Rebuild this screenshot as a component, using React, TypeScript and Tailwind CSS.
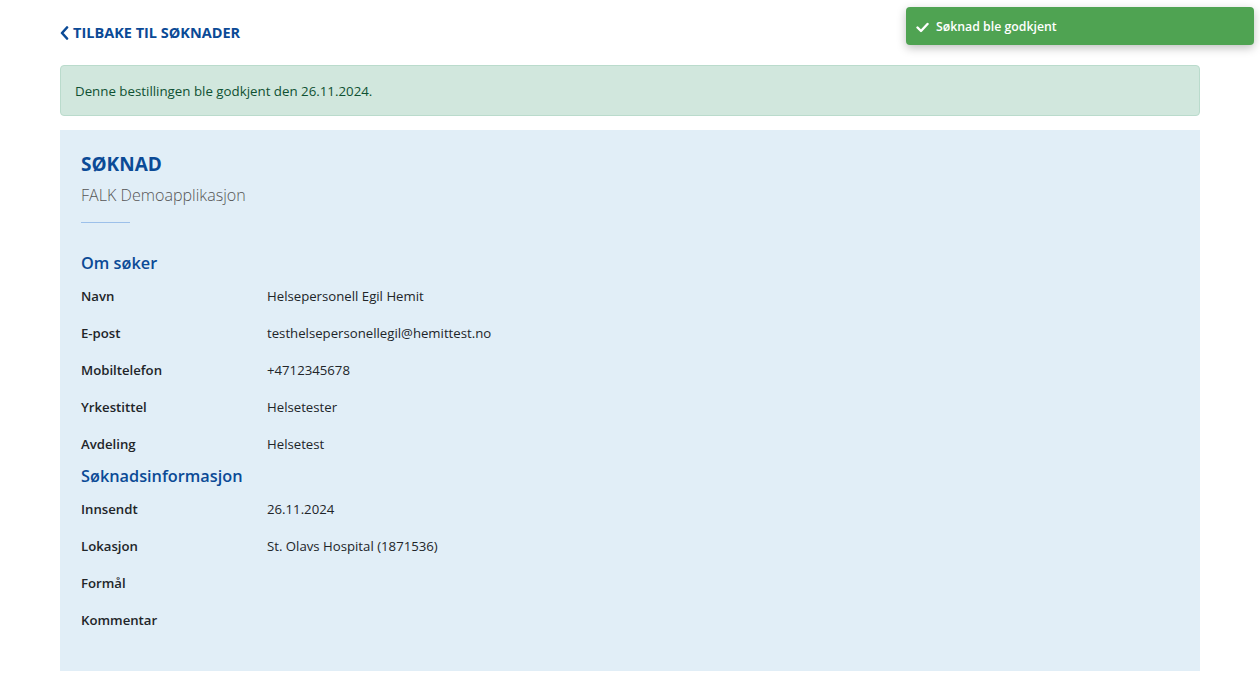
const soker = [
  { label: "Navn", value: "Helsepersonell Egil Hemit" },
  { label: "E-post", value: "testhelsepersonellegil@hemittest.no" },
  { label: "Mobiltelefon", value: "+4712345678" },
  { label: "Yrkestittel", value: "Helsetester" },
  { label: "Avdeling", value: "Helsetest" },
];

const info = [
  { label: "Innsendt", value: "26.11.2024" },
  { label: "Lokasjon", value: "St. Olavs Hospital (1871536)" },
  { label: "Formål", value: "" },
  { label: "Kommentar", value: "" },
];

function Row({ label, value }: { label: string; value: string }) {
  return (
    <div className="flex h-[37px] items-center text-[13.2px] text-[#212529]">
      <div className="w-[186px] font-semibold">{label}</div>
      <div>{value}</div>
    </div>
  );
}

export default function App() {
  return (
    <div className="relative min-h-[698px] bg-white font-['Open_Sans',sans-serif]">
      {/* toast */}
      <div className="absolute right-[6px] top-[7px] flex h-[38px] w-[348px] items-center gap-[7px] rounded-[4px] bg-[#4fa352] pl-[10px] pt-[2px] text-[12.3px] font-semibold text-white shadow-[0_3px_10px_rgba(0,0,0,0.25)]">
        <svg width="13" height="11" viewBox="0 0 13 11" fill="none">
          <path d="M1.5 5.5 L5 9 L11.5 2" stroke="white" strokeWidth="2.4" strokeLinecap="round" strokeLinejoin="round" />
        </svg>
        <span>Søknad ble godkjent</span>
      </div>

      <div className="mx-[60px] pt-[22px]">
        <a className="flex items-center gap-[4px] text-[14.5px] font-bold uppercase text-[#0b4a96]">
          <svg width="9" height="14" viewBox="0 0 9 14" fill="none">
            <path d="M7 1.5 L2 7 L7 12.5" stroke="#0b4a96" strokeWidth="2.6" strokeLinecap="round" strokeLinejoin="round" />
          </svg>
          Tilbake til søknader
        </a>

        <div className="mt-[21px] flex h-[51px] items-center rounded-[4px] border border-[#badbcc] bg-[#d1e7dd] px-[14px] pt-[3px] text-[13.3px] text-[#0f5132]">
          Denne bestillingen ble godkjent den 26.11.2024.
        </div>

        <div className="mt-[14px] h-[541px] bg-[#e1eef7] px-[21px] pt-[20px]">
          <h1 className="text-[19px] font-bold text-[#0b4a96]">SØKNAD</h1>
          <div className="mt-[5px] text-[16.1px] font-light text-[#555]">FALK Demoapplikasjon</div>
          <div className="mt-[15px] h-px w-[49px] bg-[#9cc0ea]" />

          <h2 className="mt-[28px] text-[16.3px] font-semibold text-[#0b4a96]">Om søker</h2>
          <div className="mt-[3px]">
            {soker.map((r) => (
              <Row key={r.label} {...r} />
            ))}
          </div>

          <h2 className="text-[16.3px] font-semibold text-[#0b4a96]">Søknadsinformasjon</h2>
          <div className="mt-[3px]">
            {info.map((r) => (
              <Row key={r.label} {...r} />
            ))}
          </div>
        </div>
      </div>
    </div>
  );
}
